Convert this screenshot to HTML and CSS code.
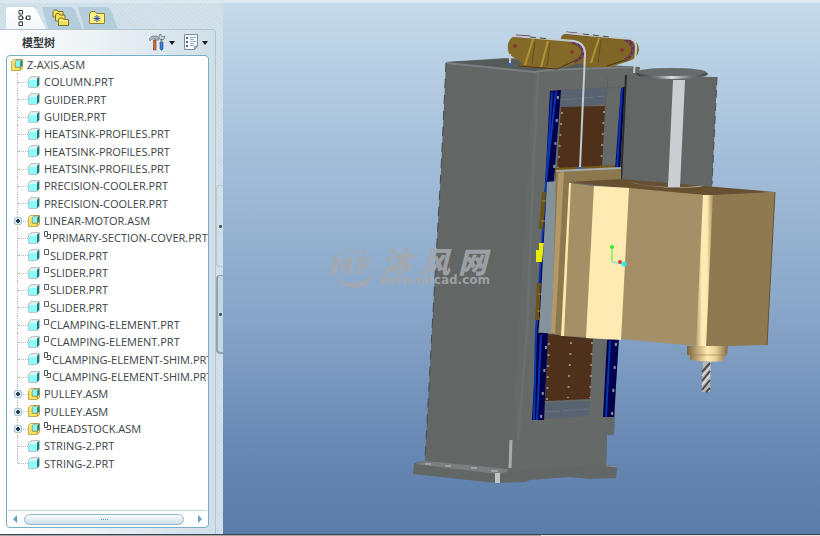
FILE: index.html
```html
<!DOCTYPE html>
<html lang="zh-CN">
<head>
<meta charset="utf-8">
<title>Z-AXIS.ASM</title>
<link rel="stylesheet" href="styles.css">
</head>
<body>
<svg class="defs" aria-hidden="true">
  <symbol id="part" viewBox="0 0 12 12">
    <path d="M0.5 3 3 0.5H11.5V9L9 11.5H0.5Z" fill="#7a8c8c"/>
    <path d="M1 3 3 1H11L9 3Z" fill="#e2eeee"/>
    <path d="M9 3 11 1V9L9 11Z" fill="#147d80"/>
    <path d="M1 3H9V11H1Z" fill="#8ffcfc"/>
    <path d="M1 3.5H8.5" stroke="#d8ffff"/>
  </symbol>
  <symbol id="asm" viewBox="0 0 13 13">
    <path d="M0.5 3 2.500 0.500H12.500V10L10 12.500H0.500Z" fill="#fae45c" stroke="#a58f3c" stroke-width=".8"/>
    <path d="M10 9V12M10 9 12 7" stroke="#b0831c"/>
    <path d="M4.500 2.500 6 1H12V7L10 9H4.500Z" fill="#8cf4f3" stroke="#927c35" stroke-width=".8"/>
    <path d="M10 3 12 1V7L10 9Z" fill="#168185"/>
    <path d="M1 3.500H4M2 1.500H5" stroke="#fff7a9"/>
  </symbol>
  <symbol id="single" viewBox="0 0 5 7"><path d="M.5.5H4.5V5.500H.5Z" fill="#fff" stroke="#5b5f61"/></symbol>
  <symbol id="linked" viewBox="0 0 7 9"><path d="M.5.5H3.500V5.500H.5ZM3.500 3.500H6.500V7.500H2.500" fill="none" stroke="#4d5356"/></symbol>
</svg>
<div class="app">
  <aside class="sidebar">
    <nav class="tabs">
      <button class="tab active" aria-label="模型树">
        <svg width="14" height="18" viewBox="0 0 14 18" fill="#fff" stroke="#373b3e"><path d="M3 4V14M3 9H9" stroke-dasharray="1 1"/><path d="M1 1.500H4.500V5H1ZM1 7H4.500V10.500H1ZM1 13H4.500V16.500H1ZM8.500 7H12V10.500H8.500Z"/></svg>
      </button>
      <button class="tab folders" aria-label="文件夹浏览器">
        <svg width="18" height="18" viewBox="0 0 18 18" fill="#f5df55" stroke="#7c7231"><path d="M1 2.500 2 1H5L6 2.500H11V8H1Z"/><path d="M3.500 6 4.500 4.500H7L8 6H13V12H3.500Z"/><path d="M6.500 10.500 7.500 9H10.500L11.500 10.500H16.500V16.500H6.500Z"/><path d="M7 11.500H16" stroke="#fff8a0"/></svg>
      </button>
      <button class="tab favorites" aria-label="收藏夹">
        <svg width="16" height="14" viewBox="0 0 16 14"><path d="M.5 3 2 .5H6L7.500 2.500H15.500V12.500H.5Z" fill="#fff481" stroke="#8c8030"/><path d="M8 4V11M4.500 7.500H11.500M5.500 5 10.500 10M10.500 5 5.500 10" stroke="#2f49b4"/></svg>
      </button>
    </nav>
    <div class="body">
      <section class="panel">
        <header class="head">
          <h1>模型树</h1>
          <div class="tools">
            <button class="tool" aria-label="设置">
              <svg width="17" height="17" viewBox="0 0 17 17"><path d="M0 5 3 2H8L10 4V6H7L6 5H3L1 7Z" fill="#a7b5c0" stroke="#677682" stroke-width=".6"/><path d="M4.500 6H7V16H4.500Z" fill="#d26d31" stroke="#713c29" stroke-width=".6"/><path d="M11 8H14V15L12.500 16.500 11 15Z" fill="#397bd0" stroke="#2a4e86" stroke-width=".6"/><path d="M10 1V4L12 6 15 5 16 2 14 3 12 2V0ZM12 5H13V9H12Z" fill="#d3dce2" stroke="#586c7a" stroke-width=".7"/></svg>
              <i class="caret"></i>
            </button>
            <button class="tool" aria-label="显示">
              <svg width="15" height="17" viewBox="0 0 15 17"><path d="M.5.5H13.500V12L10.500 15.500H.5Z" fill="#f7fbfe" stroke="#788b9f"/><path d="M13.500 12H10.500V15.500Z" fill="#a1b5c4" stroke="#788b9f" stroke-width=".6"/><path d="M2 4H4M2 8H4M2 12H4" stroke="#54677e" stroke-width="2"/><path d="M6 3.500H12M6 5.500H10M6 7.500H12M6 9.500H10M6 11.500H10" stroke="#9caec0"/></svg>
              <i class="caret"></i>
            </button>
          </div>
        </header>
        <div class="box">
          <ul class="tree">
            <li class="root"><svg class="icon"><use href="#asm"/></svg>Z-AXIS.ASM</li>
            <li><svg class="icon"><use href="#part"/></svg>COLUMN.PRT</li>
            <li><svg class="icon"><use href="#part"/></svg>GUIDER.PRT</li>
            <li><svg class="icon"><use href="#part"/></svg>GUIDER.PRT</li>
            <li><svg class="icon"><use href="#part"/></svg>HEATSINK-PROFILES.PRT</li>
            <li><svg class="icon"><use href="#part"/></svg>HEATSINK-PROFILES.PRT</li>
            <li><svg class="icon"><use href="#part"/></svg>HEATSINK-PROFILES.PRT</li>
            <li><svg class="icon"><use href="#part"/></svg>PRECISION-COOLER.PRT</li>
            <li><svg class="icon"><use href="#part"/></svg>PRECISION-COOLER.PRT</li>
            <li><button class="expand" aria-label="展开"></button><svg class="icon"><use href="#asm"/></svg>LINEAR-MOTOR.ASM</li>
            <li><svg class="icon"><use href="#part"/></svg><svg class="mark linked"><use href="#linked"/></svg>PRIMARY-SECTION-COVER.PRT</li>
            <li><svg class="icon"><use href="#part"/></svg><svg class="mark"><use href="#single"/></svg>SLIDER.PRT</li>
            <li><svg class="icon"><use href="#part"/></svg><svg class="mark"><use href="#single"/></svg>SLIDER.PRT</li>
            <li><svg class="icon"><use href="#part"/></svg><svg class="mark"><use href="#single"/></svg>SLIDER.PRT</li>
            <li><svg class="icon"><use href="#part"/></svg><svg class="mark"><use href="#single"/></svg>SLIDER.PRT</li>
            <li><svg class="icon"><use href="#part"/></svg><svg class="mark"><use href="#single"/></svg>CLAMPING-ELEMENT.PRT</li>
            <li><svg class="icon"><use href="#part"/></svg><svg class="mark"><use href="#single"/></svg>CLAMPING-ELEMENT.PRT</li>
            <li><svg class="icon"><use href="#part"/></svg><svg class="mark linked"><use href="#linked"/></svg>CLAMPING-ELEMENT-SHIM.PRT</li>
            <li><svg class="icon"><use href="#part"/></svg><svg class="mark linked"><use href="#linked"/></svg>CLAMPING-ELEMENT-SHIM.PRT</li>
            <li><button class="expand" aria-label="展开"></button><svg class="icon"><use href="#asm"/></svg>PULLEY.ASM</li>
            <li><button class="expand" aria-label="展开"></button><svg class="icon"><use href="#asm"/></svg>PULLEY.ASM</li>
            <li><button class="expand" aria-label="展开"></button><svg class="icon"><use href="#asm"/></svg><svg class="mark linked"><use href="#linked"/></svg>HEADSTOCK.ASM</li>
            <li><svg class="icon"><use href="#part"/></svg>STRING-2.PRT</li>
            <li><svg class="icon"><use href="#part"/></svg>STRING-2.PRT</li>
          </ul>
          <div class="scroll">
            <button class="arrow left" aria-label="向左滚动"></button>
            <div class="track"><div class="thumb"></div></div>
            <button class="arrow right" aria-label="向右滚动"></button>
          </div>
        </div>
      </section>
      <div class="gutter">
        <button class="grip" aria-label="折叠"></button>
        <button class="grip raised" aria-label="展开面板"></button>
      </div>
    </div>
  </aside>
  <main class="view">
    <svg class="scene" viewBox="223 3 597 531" preserveAspectRatio="xMidYMid slice">
      <defs>
        <linearGradient id="rim"><stop offset="0" stop-color="#373b3b"/><stop offset=".3" stop-color="#777b7c"/><stop offset=".5" stop-color="#dedfe0"/><stop offset=".75" stop-color="#727676"/><stop offset="1" stop-color="#444848"/></linearGradient>
        <linearGradient id="edge"><stop offset="0" stop-color="#b49d70"/><stop offset=".35" stop-color="#ffebb5"/><stop offset=".65" stop-color="#ffe9b0"/><stop offset="1" stop-color="#a58d5d"/></linearGradient>
        <linearGradient id="nose"><stop offset="0" stop-color="#78643d"/><stop offset=".35" stop-color="#dac18b"/><stop offset=".5" stop-color="#ffebb4"/><stop offset=".7" stop-color="#e9cf95"/><stop offset="1" stop-color="#806b42"/></linearGradient>
      </defs>
      <!-- column -->
      <path d="M446 62 506 58 560 61 640 68 626 110 614 435H607L606 465 617 467 616 478 590 479 570 477 530 480 525 482 496 483 413 474 414 463 425 461 432 330 441 170Z" fill="#626665"/>
      <path d="M447 62 506 59 640 67 626 72 534 71Z" fill="#555a5b"/>
      <path d="M534 71 640 67 625 110 614 435H607L606 466 510 470Z" fill="#656968"/>
      <path d="M446 63 534 72 548 70 632 67" fill="none" stroke="#797e80" stroke-width="2"/>
      <path d="M538 73 533 180 527 330 518 440" fill="none" stroke="#6b6f6f" stroke-width="3"/>
      <path d="M446 63 441 170 432 330 425 460" fill="none" stroke="#454b50" stroke-dasharray="9 7"/>
      <path d="M550 91 626 87M608 77 601 170" fill="none" stroke="#5c6060"/>
      <path d="M511 440 510 468" stroke="#a9acac" stroke-width="3"/>
      <path d="M426 461 508 469 507 472 498 474 415 464Z" fill="#7a7e7e"/>
      <path d="M425 464H431M445 466H451M471 468H477M491 471H498" stroke="#c4c6c6" stroke-width="1"/>
      <path d="M495 473H500V483H495Z" fill="#c0c3c3"/>
      <path d="M606 466 617 467" stroke="#858989"/>
      <!-- window panels -->
      <path d="M561 90 607 88 605 104 560 108ZM545 403 590 401 589 416 543 419Z" fill="#596270"/>
      <path d="M561 100 605 96M545 412 589 409" stroke="#6b7380" stroke-dasharray="15 3"/>
      <path d="M561 107 605 106 602 168 557 170ZM548 334 593 339 590 399 545 401Z" fill="#4f301a"/>
      <path d="M562 112 558 168M604 111 601 166M549 343 547 400M592 342 590 398M571 342 568 398" stroke="#908b83" stroke-width="2" stroke-dasharray="2 9"/>
      <path d="M553 168 618 165V170L553 173Z" fill="#745819"/>
      <!-- rails -->
      <path d="M550 91 561 90 550 230 538 333H548L544 420H532L537 330 543 225Z" fill="#00004f"/>
      <path d="M621 88 625 87 620 170H615ZM607 340 619 338 614 417H603Z" fill="#00004f"/>
      <path d="M552 92 543 230 536 330 534 420M556 91 546 182M541 335 537 420M622 88 617 168M610 341 606 417" fill="none" stroke="#0736ad" stroke-width="2"/>
      <path d="M558 96 554 170M546 346 541 418M616 343 612 415" stroke="#9194a4" stroke-width="2" stroke-dasharray="3 20"/>
      <path d="M544 192 541 229M539 283 537 320" stroke="#6b5316" stroke-width="4"/>
      <path d="M542 201H547M541 221H545M538 294H542M537 311H541" stroke="#b48b25"/>
      <path d="M539 243H544L542 262H536V250H539Z" fill="#e9eb00"/>
      <!-- motor -->
      <path d="M626 75 717 77 712 187 620 182Z" fill="#626665"/>
      <path d="M626 75 621 180" stroke="#292d2d" stroke-width="2"/>
      <path d="M673 80H685L680 187H668Z" fill="#cbced1"/>
      <ellipse cx="672" cy="74" rx="36" ry="5" fill="url(#rim)"/>
      <ellipse cx="671" cy="72" rx="35" ry="4" fill="#656a6a"/>
      <path d="M717 77 712 184" stroke="#4c5152" stroke-dasharray="8 5"/>
      <!-- headstock -->
      <path d="M547 182 556 181 556 171 562 171 552 334 539 332Z" fill="#84929b"/>
      <path d="M556 172 621 168V182L569 183 562 336 552 333Z" fill="#8c784f"/>
      <path d="M558 173 564 172 555 334 551 333Z" fill="#b49968"/>
      <path d="M556 171 621 168" stroke="#a3aaae" stroke-width="2"/>
      <path d="M569 182 621 179 775 192 707 197Z" fill="#66502f"/>
      <path d="M570 183 594 186 629 188 705 195 697 346 621 339 562 336Z" fill="#a58f67"/>
      <path d="M569 183H571L564 336H561Z" fill="#ffe8ae"/>
      <path d="M594 186 629 188 621 340 586 338Z" fill="#ffebb2"/>
      <path d="M712 195 775 192 767 345 704 347Z" fill="#8e7950"/>
      <path d="M703 195H713L706 347 696 346Z" fill="url(#edge)"/>
      <path d="M775 192 767 345" stroke="#665433"/>
      <path d="M630 182C645 187 687 189 704 185L700 187Q660 190 630 182" fill="#a7abad"/>
      <path d="M668 182H680V187H668Z" fill="#cbced1"/>
      <path d="M687 346 728 346 727 355H725L724 361Q707 363 690 360V355H687Z" fill="url(#nose)"/>
      <path d="M688 355H727" stroke="#947b4d" stroke-opacity=".6"/>
      <path d="M703 362H711L710 392H702Z" fill="#bbb9b6"/>
      <path d="M702 372 710 363M702 381 710 371M702 390 710 380M706 392 710 388" stroke="#484746" stroke-width="2"/>
      <path d="M702 376 710 367M702 385 710 375" stroke="#f4f2ee"/>
      <!-- pulleys -->
      <path d="M561 37Q564 32 575 33L629 39Q639 41 639 50 638 58 629 61L610 67H586L560 50Z" fill="#806626"/>
      <path d="M515 36 575 41Q586 44 586 54 585 62 573 65L557 69 518 67 522 63 510 55Q507 51 508 44 510 37 515 36Z" fill="#846a28"/>
      <path d="M533 39 525 65M548 41 541 67M599 38 591 63" stroke="#b09139" stroke-width="2"/>
      <path d="M535 42 532 64M550 43 547 66M601 40 598 63" stroke="#66501b"/>
      <path d="M518 66 557 69 574 61M607 66 628 59" fill="none" stroke="#493915"/>
      <path d="M516 36 530 37M571 42Q582 44 583 52 583 58 574 62M566 33 577 34M624 39Q633 42 633 50 632 56 625 60" fill="none" stroke="#683441" stroke-width="3"/>
      <path d="M516 36 530 37M571 42Q582 44 583 52 583 58 574 62M566 33 577 34M624 39Q633 42 633 50 632 56 625 60" fill="none" stroke="#696bd1" stroke-dasharray="2 3"/>
      <path d="M513 36 574 41Q585 43 585 54L580 168M565 33 631 39Q637 41 636 50L634 73M510 54V65" fill="none" stroke="#c2cbd0" stroke-width="2"/>
      <path d="M530 37 550 39M583 34 610 37" stroke="#4c4c40" stroke-dasharray="6 4"/>
      <circle cx="515" cy="46" r="2" fill="#85392f"/><circle cx="572" cy="52" r="2" fill="#85392f"/><circle cx="622" cy="50" r="2" fill="#85392f"/>
      <path d="M509 64H512M578 168H582" stroke="#335dd0" stroke-width="2"/>
      <!-- origin triad -->
      <path d="M612 247V262" stroke="#44ee31"/><path d="M612 262 623 264" stroke="#56e5d8"/>
      <circle cx="612" cy="247" r="2" fill="#35ee25"/><circle cx="620" cy="262" r="2" fill="#e33b28"/><circle cx="624" cy="264" r="2.500" fill="#30e9ee"/>
      <!-- watermark -->
      <g class="watermark">
        <path d="M338 257Q345 247 361 250 346 249 338 257ZM336 277Q343 283 352 283 368 283 373 271 370 288 354 288 341 287 336 277ZM363 248 364 251 367 252 364 253 363 256 362 253 359 252 362 251Z"/>
        <text class="logo" x="330 355" y="275">MF</text>
        <text class="name" x="382 421 458" y="273">沐风网</text>
        <text class="url" x="379" y="284">www.mfcad.com</text>
      </g>
    </svg>
  </main>
  <footer class="status"></footer>
</div>
</body>
</html>
```
FILE: styles.css
```css
* { box-sizing: border-box; }
body { margin: 0; font-family: "Open Sans", "Noto Sans CJK SC", sans-serif; font-size: 11px; color: #3c4347; }
button { border: 0; padding: 0; background: none; }
.defs { display: none; }
.app {
  display: grid;
  grid-template: "side view" 1fr "status status" 2px / 223px 1fr;
  height: 100vh;
  border-top: 3px solid #dbe8f0;
}
.sidebar {
  grid-area: side;
  display: flex;
  flex-direction: column;
  min-height: 0;
  background: repeating-linear-gradient(45deg, #cbdce6 0 1px, #d3e2ea 1px 3px);
}
.tabs { display: flex; height: 26px; padding: 4px 0 0 6px; }
.tab {
  display: flex;
  align-items: center;
  justify-content: center;
  width: 40px;
  margin-right: -4px;
  padding-right: 2px;
  background: #b3cddd;
  clip-path: polygon(0 0, 74% 0, 82% 12%, 100% 100%, 16% 100%);
}
.tab.active { background: linear-gradient(#fff, #f3f7fa); clip-path: polygon(0 2px, 2px 0, 66% 0, 76% 12%, 100% 100%, 0 100%); }
.body { display: flex; flex: 1; min-height: 0; }
.panel {
  display: flex;
  flex: 1;
  flex-direction: column;
  min-width: 0;
  padding: 0 6px 6px;
  border: 1px solid #b2c5d0;
  border-width: 1px 1px 0 0;
  border-radius: 0 4px 0 0;
  background: linear-gradient(90deg, #fff, #eef3f6 40%, #cfdfe8);
}
.head { display: flex; align-items: center; justify-content: space-between; height: 25px; padding: 0 1px 0 16px; }
h1 { margin: 0; font-size: 11px; line-height: 16px; font-weight: 700; color: #343b41; }
.tools { display: flex; gap: 9px; }
.tool { display: flex; align-items: center; gap: 3px; }
.caret { border: 3px solid transparent; border-top: 4px solid #171c20; border-bottom: 0; }
.box {
  display: flex;
  flex: 1;
  flex-direction: column;
  min-height: 0;
  border: 1px solid #78aec6;
  border-radius: 4px;
  background: #fff;
}
.tree {
  display: grid;
  flex: 1;
  grid-auto-rows: 1fr;
  min-height: 0;
  margin: 0;
  padding: 0 0 38px;
  list-style: none;
  overflow: hidden;
}
.tree li { position: relative; display: flex; align-items: center; min-width: 0; padding-left: 21px; white-space: nowrap; line-height: 17px; }
.tree li.root { padding-left: 4px; }
.icon { flex: none; width: 12px; height: 12px; margin-right: 4px; }
.mark { flex: none; width: 5px; height: 7px; margin: -5px 1px 0 0; }
.mark.linked { width: 7px; height: 9px; }
.tree li:not(.root)::before { content: ""; position: absolute; left: 10px; top: 0; bottom: 0; border-left: 1px dotted #b4babd; }
.tree li:last-child::before { bottom: 50%; }
.tree li:not(.root)::after { content: ""; position: absolute; left: 11px; top: 50%; width: 10px; border-top: 1px dotted #b4babd; }
.expand {
  position: absolute;
  z-index: 1;
  left: 7px;
  top: 5px;
  width: 8px;
  height: 8px;
  border: 1px solid #a9c5d6;
  border-radius: 2px;
  background: linear-gradient(#263e4d, #263e4d) center / 4px 2px no-repeat, linear-gradient(#263e4d, #263e4d) center / 2px 4px no-repeat, #d9e8f0;
}
.scroll { display: flex; align-items: center; gap: 7px; height: 17px; margin: 0 1px; padding: 0 5px; border-top: 1px solid #c1d8e4; }
.arrow { width: 4px; height: 8px; background: #65a4bd; }
.arrow.left { clip-path: polygon(0 50%, 100% 0, 100% 100%); }
.arrow.right { clip-path: polygon(0 0, 100% 50%, 0 100%); }
.track { flex: 1; padding-right: 7px; }
.thumb {
  height: 11px;
  border: 1px solid #91b5c9;
  border-radius: 6px;
  background: repeating-linear-gradient(90deg, #68899d 0 1px, transparent 1px 2px) center / 7px 1px no-repeat, linear-gradient(#fbfdfe, #c9dde9);
}
.gutter { display: flex; flex-direction: column; gap: 8px; width: 7px; padding-top: 156px; }
.grip {
  width: 7px;
  height: 82px;
  border: 1px solid #b4cbd7;
  border-right: 0;
  border-radius: 4px 0 0 4px;
  background: radial-gradient(circle, #41515b 0 1px, transparent 2px) center / 5px 5px no-repeat;
}
.grip.raised { height: 79px; border: 1px solid #8fa5b3; border-width: 1px 0 2px 2px; background-color: #c7d7e1; }
.view { grid-area: view; min-width: 0; min-height: 0; background: linear-gradient(#c5dbea, #a3bdd9 30%, #86a3c6 61%, #6788b4 84%, #5b7ba9); }
.scene { display: block; width: 100%; height: 100%; }
.watermark { fill: #a5a9ad; fill-opacity: .9; }
.logo { font: italic 700 24px "DejaVu Sans", sans-serif; }
.name { font: italic 900 29px "Noto Sans CJK SC", sans-serif; }
.url { font: 700 12px "DejaVu Sans", sans-serif; }
.status { grid-area: status; border-top: 1px solid #35465a; background: linear-gradient(90deg, #a7a6a1 66%, #e8e7e4 66%); }
```
